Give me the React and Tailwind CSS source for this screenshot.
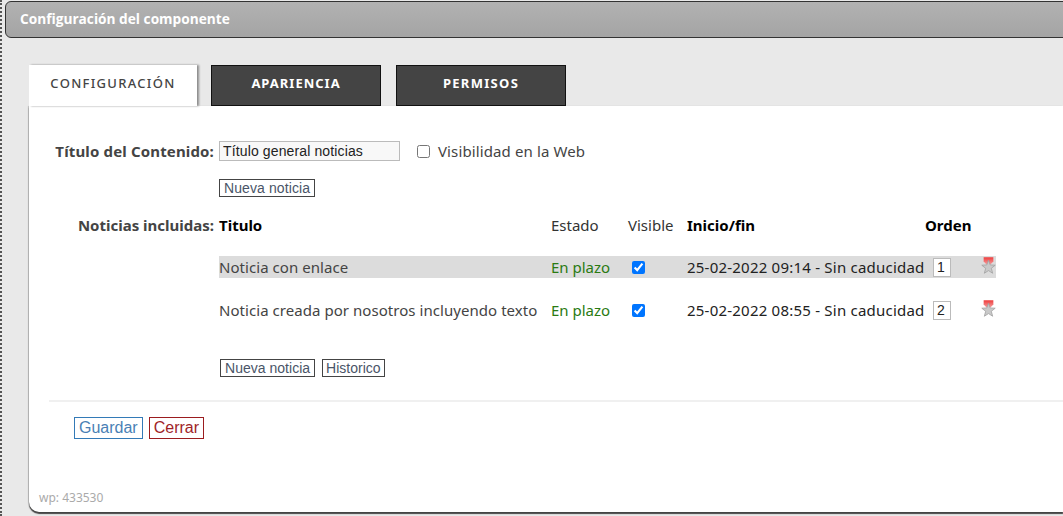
const uiFont = "font-['Noto_Sans','Open_Sans',sans-serif]";
const btn = "font-['Liberation_Sans',Arial,sans-serif] border border-[#444] text-[14px] leading-[16px] h-[18px] text-[#4a5568] bg-white";

const noticias = [
  { titulo: "Noticia con enlace", fecha: "25-02-2022 09:14 - Sin caducidad", orden: "1", band: true },
  { titulo: "Noticia creada por nosotros incluyendo texto", fecha: "25-02-2022 08:55 - Sin caducidad", orden: "2", band: false },
];

const StarIcon = ({ id }) => (
  <svg width="17" height="20" viewBox="0 0 17 20">
    <defs>
      <linearGradient id={id} x1="0" y1="0" x2="0" y2="1">
        <stop offset="0" stopColor="#ee3b3b" />
        <stop offset="1" stopColor="#f59a9a" />
      </linearGradient>
    </defs>
    <path d="M3 0h11v5l-3 3H6L3 5z" fill={`url(#${id})`} />
    <path d="M8.5 3.5l2 5.3 5.6.3-4.4 3.5 1.5 5.6-4.7-3-4.7 3 1.5-5.6L.9 9.1l5.6-.3z" fill="#c9c9c9" stroke="#a0a0a0" strokeWidth="0.9" />
  </svg>
);

const Row = ({ n }) => (
  <div className={`flex items-center h-[22px] w-[777px] text-[15px] text-[#444] ${n.band ? "bg-[#dcdcdc]" : ""}`}>
    <div className="w-[332px] whitespace-nowrap tracking-[0.05px]">{n.titulo}</div>
    <div className="w-[77px] text-[#2a7a12] whitespace-nowrap">En plazo</div>
    <div className="w-[59px] pl-[4px] flex items-center">
      <input type="checkbox" defaultChecked className="w-[13px] h-[13px] m-0 accent-[#0075ff]" />
    </div>
    <div className="w-[246px] whitespace-nowrap text-[#222] tracking-[0.22px]">{n.fecha}</div>
    <div className="w-[48px]">
      <span className="flex items-center w-[18px] h-[19px] pl-[3px] border border-[#bbb] bg-white text-[14px] font-['Liberation_Sans',Arial,sans-serif] text-[#222]">{n.orden}</span>
    </div>
    <div className="w-[15px] h-[22px] flex items-start overflow-visible"><StarIcon id={`cinta${n.orden}`} /></div>
  </div>
);

export default function App() {
  return (
    <div className={`w-[1063px] h-[516px] overflow-hidden bg-[#e9e9e9] border-l-2 border-dotted border-[#555] pl-[3px] pt-px ${uiFont}`}>
      <div className="h-[37px] -mr-2 flex items-center pl-[14px] rounded-l-[6px] border border-[#333] bg-gradient-to-b from-[#b2b2b2] to-[#a4a4a4] text-white text-[13.7px] font-bold font-['Open_Sans',sans-serif]">
        Configuración del componente
      </div>

      <div className="ml-[24px] mt-[27px]">
        <div className="flex items-end h-[41px]">
          <div className="relative z-10 w-[168px] h-[41px] bg-white shadow-[2px_0_2px_rgba(0,0,0,0.4)] flex items-center justify-center pb-[4px] text-[13px] font-medium tracking-[1.3px] text-[#444]">
            CONFIGURACIÓN
          </div>
          <div className="ml-[14px] w-[170px] h-[41px] bg-[#444] border border-[#111] flex items-center justify-center pb-[4px] text-[13px] font-bold tracking-[1px] text-white">
            APARIENCIA
          </div>
          <div className="ml-[15px] w-[170px] h-[41px] bg-[#444] border border-[#111] flex items-center justify-center pb-[4px] text-[13px] font-bold tracking-[1.3px] text-white">
            PERMISOS
          </div>
        </div>

        <div className="h-[406px] bg-white rounded-bl-[10px] shadow-[0_2px_1px_rgba(0,0,0,0.7),-1px_0_1px_rgba(0,0,0,0.2)] flex flex-col">
          <div className="flex items-center mt-[34px] h-[22px]">
            <div className="w-[185px] text-right text-[15px] font-bold tracking-[0.15px] text-[#444] whitespace-nowrap">Título del Contenido:</div>
            <input
              readOnly
              value="Título general noticias"
              className="ml-[5px] w-[181px] h-[20px] px-[3px] border border-[#bbb] bg-[#f8f8f8] text-[14px] tracking-[0.13px] font-['Liberation_Sans',Arial,sans-serif] text-[#222] outline-none"
            />
            <input type="checkbox" className="ml-[17px] w-[13px] h-[13px] m-0" />
            <span className="ml-[8px] text-[15px] tracking-[0.12px] text-[#444]">Visibilidad en la Web</span>
          </div>

          <div className="pl-[190px] mt-[13px]">
            <button className={`${btn} px-1 tracking-[0.1px]`}>Nueva noticia</button>
          </div>

          <div className="flex items-center mt-[15px] h-[22px] text-[15px]">
            <div className="w-[185px] text-right font-bold text-[#444] whitespace-nowrap">Noticias incluidas:</div>
            <div className="ml-[5px] flex items-center">
              <div className="w-[332px] font-bold text-black">Titulo</div>
              <div className="w-[77px] text-[#333]">Estado</div>
              <div className="w-[59px] text-[#333]">Visible</div>
              <div className="w-[238px] font-bold text-black">Inicio/fin</div>
              <div className="font-bold text-black">Orden</div>
            </div>
          </div>

          <div className="pl-[190px] mt-[20px] flex flex-col gap-[21px]">
            {noticias.map((n) => (
              <Row key={n.orden} n={n} />
            ))}
          </div>

          <div className="pl-[191px] mt-[38px] flex gap-[7px]">
            <button className={`${btn} px-1 tracking-[0.02px]`}>Nueva noticia</button>
            <button className={`${btn} px-[3px]`}>Historico</button>
          </div>

          <div className="ml-[20px] mt-[23px] border-t-2 border-[#f0f0f0]" />

          <div className="pl-[45px] mt-[15px] flex gap-[6px] font-['Liberation_Sans',Arial,sans-serif] text-[16px]">
            <button className="h-[22px] px-[4px] leading-[20px] border border-[#337ab7] text-[#4a7fb5] bg-white">Guardar</button>
            <button className="h-[22px] px-[4px] leading-[20px] border border-[#9b1c1f] text-[#a01f28] bg-white">Cerrar</button>
          </div>

          <div className="mt-auto pl-[10px] pb-[5px] text-[12px] text-[#aaa]">wp: 433530</div>
        </div>
      </div>
    </div>
  );
}
